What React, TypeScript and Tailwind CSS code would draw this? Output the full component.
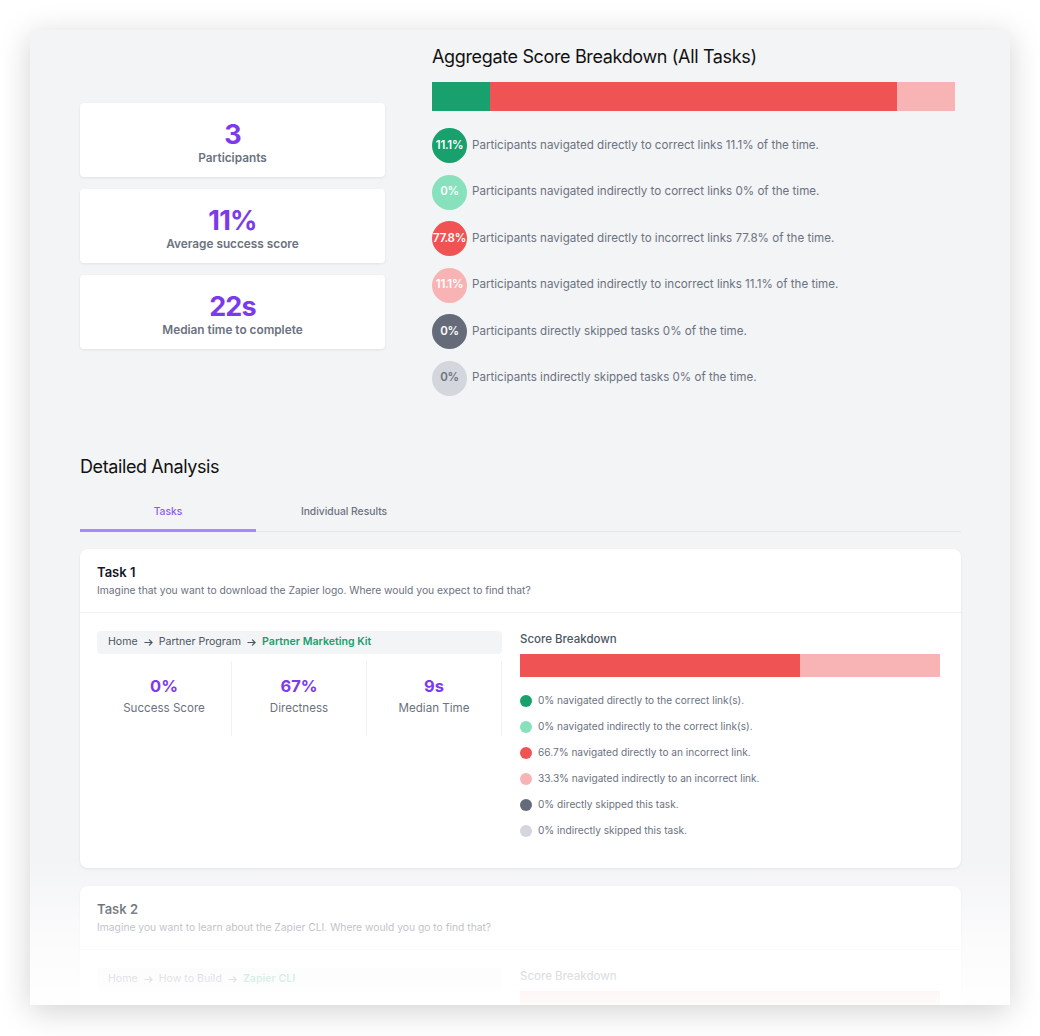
import React from 'react'

const aggregate = [
  { pct: '11.1%', bg: 'bg-[#18a06d]', fg: 'text-white', text: 'Participants navigated directly to correct links 11.1% of the time.' },
  { pct: '0%', bg: 'bg-[#86e1bc]', fg: 'text-white', text: 'Participants navigated indirectly to correct links 0% of the time.' },
  { pct: '77.8%', bg: 'bg-[#ef5353]', fg: 'text-white', text: 'Participants navigated directly to incorrect links 77.8% of the time.' },
  { pct: '11.1%', bg: 'bg-[#f8b4b4]', fg: 'text-white', text: 'Participants navigated indirectly to incorrect links 11.1% of the time.' },
  { pct: '0%', bg: 'bg-[#656b78]', fg: 'text-white', text: 'Participants directly skipped tasks 0% of the time.' },
  { pct: '0%', bg: 'bg-[#d3d6dc]', fg: 'text-[#6b7280]', text: 'Participants indirectly skipped tasks 0% of the time.' },
]

const stats = [
  { value: '3', label: 'Participants' },
  { value: '11%', label: 'Average success score' },
  { value: '22s', label: 'Median time to complete' },
]

const legend1 = [
  { dot: 'bg-[#18a06d]', text: '0% navigated directly to the correct link(s).' },
  { dot: 'bg-[#86e1bc]', text: '0% navigated indirectly to the correct link(s).' },
  { dot: 'bg-[#ef5353]', text: '66.7% navigated directly to an incorrect link.' },
  { dot: 'bg-[#f8b4b4]', text: '33.3% navigated indirectly to an incorrect link.' },
  { dot: 'bg-[#656b78]', text: '0% directly skipped this task.' },
  { dot: 'bg-[#d3d6dc]', text: '0% indirectly skipped this task.' },
]

function Arrow() {
  return (
    <svg width="9" height="9" viewBox="0 0 10 10" className="mx-[6px] text-[#4b5563]" fill="none" stroke="currentColor" strokeWidth="1.3" strokeLinecap="round" strokeLinejoin="round">
      <path d="M1 5h8M6 2l3 3-3 3" />
    </svg>
  )
}

function Breadcrumb({ items, last }: { items: string[]; last: string }) {
  return (
    <div className="flex h-[23px] items-center rounded bg-[#f3f4f6] px-[11px] text-[10.6px] text-[#4b5563]">
      {items.map((it) => (
        <React.Fragment key={it}>
          <span>{it}</span>
          <Arrow />
        </React.Fragment>
      ))}
      <span className="font-semibold text-[#18a06d]">{last}</span>
    </div>
  )
}

function TaskCard({
  title,
  question,
  crumbs,
  last,
  metrics,
  direct,
  indirect,
  legend,
}: {
  title: string
  question: string
  crumbs: string[]
  last: string
  metrics: { value: string; label: string }[]
  direct: number
  indirect: number
  legend: { dot: string; text: string }[]
}) {
  return (
    <div className="rounded-lg bg-white shadow-[0_1px_3px_rgba(0,0,0,0.08)]">
      <div className="border-b border-[#eceef1] px-[17px] pt-[13px] pb-[14px]">
        <div className="text-[13px] leading-5 font-semibold text-[#111827]">{title}</div>
        <div className="text-[10.3px] leading-4 text-[#6b7280]">{question}</div>
      </div>
      <div className="flex gap-[18px] pt-[18px] pr-[21px] pb-[29px] pl-[17px]">
        <div className="w-[405px]">
          <Breadcrumb items={crumbs} last={last} />
          <div className="mt-[7px] grid grid-cols-3">
            {metrics.map((m) => (
              <div key={m.label} className="flex h-[75px] flex-col items-center border-r border-[#f1f2f4] pt-[14px]">
                <div className="text-[16.5px] leading-[22px] font-bold text-[#7c3aed]">{m.value}</div>
                <div className="mt-[2px] text-[11.6px] leading-[18px] text-[#6b7280]">{m.label}</div>
              </div>
            ))}
          </div>
        </div>
        <div className="flex-1">
          <div className="text-[11.5px] leading-[16px] font-medium text-[#4b5563]">Score Breakdown</div>
          <div className="mt-[7px] flex h-[23px] w-full">
            <div className="h-full bg-[#ef5353]" style={{ width: `${direct}%` }} />
            <div className="h-full bg-[#f8b4b4]" style={{ width: `${indirect}%` }} />
          </div>
          {legend.length > 0 && (
            <div className="mt-[16px] flex flex-col gap-[10px]">
              {legend.map((l) => (
                <div key={l.text} className="flex h-4 items-center">
                  <span className={`h-3 w-3 rounded-full ${l.dot}`} />
                  <span className="ml-[6px] text-[10.1px] text-[#6b7280]">{l.text}</span>
                </div>
              ))}
            </div>
          )}
        </div>
      </div>
    </div>
  )
}

export default function App() {
  return (
    <div className="h-[1036px] overflow-hidden bg-white pt-[30px] pl-[30px] font-['Inter','Noto_Sans',sans-serif]">
      <div className="relative h-[975px] w-[980px] overflow-hidden bg-[#f3f4f6] shadow-[0_6px_30px_rgba(0,0,0,0.18)]">
        <div className="pt-[13px] pr-[49px] pl-[50px]">
          {/* Top summary */}
          <div className="flex">
            <div className="mt-[60px] flex w-[305px] flex-col gap-3">
              {stats.map((s) => (
                <div key={s.label} className="flex h-[74px] flex-col items-center rounded bg-white pt-[17px] shadow-[0_1px_3px_rgba(0,0,0,0.08)]">
                  <div className="text-[27px] leading-[30px] font-bold tracking-[-0.8px] text-[#7c3aed]">{s.value}</div>
                  <div className="text-[11.8px] leading-4 font-semibold text-[#6b7280]">{s.label}</div>
                </div>
              ))}
            </div>
            <div className="ml-[47px] w-[523px]">
              <h2 className="text-[18px] leading-[28px] tracking-[-0.35px] text-[#111]">Aggregate Score Breakdown (All Tasks)</h2>
              <div className="mt-[11px] flex h-[29px] w-full">
                <div className="h-full bg-[#18a06d]" style={{ width: '11.1%' }} />
                <div className="h-full bg-[#ef5353]" style={{ width: '77.8%' }} />
                <div className="h-full bg-[#f8b4b4]" style={{ width: '11.1%' }} />
              </div>
              <div className="mt-[17px] flex flex-col gap-[11.5px]">
                {aggregate.map((a) => (
                  <div key={a.text} className="flex items-center">
                    <div className={`flex h-[35px] w-[35px] shrink-0 items-center justify-center rounded-full text-[11.5px] font-semibold tracking-[-0.3px] ${a.bg} ${a.fg}`}>
                      {a.pct}
                    </div>
                    <span className="ml-[5px] text-[11.6px] text-[#6b7280]">{a.text}</span>
                  </div>
                ))}
              </div>
            </div>
          </div>

          {/* Detailed analysis */}
          <h2 className="mt-[57px] text-[18px] leading-[28px] tracking-[-0.4px] text-[#111]">Detailed Analysis</h2>
          <div className="mt-[6px] flex border-b border-[#e5e7eb]">
            <div className="-mb-px w-[176px] border-b-[3px] border-[#a78bfa] pt-4 pb-[10px] text-center text-[10.3px] leading-4 font-medium text-[#8b5cf6]">
              Tasks
            </div>
            <div className="w-[176px] pt-4 pb-[10px] text-center text-[10.3px] leading-4 font-medium text-[#6b7280]">
              Individual Results
            </div>
          </div>

          <div className="mt-[17px] flex flex-col gap-[18px]">
            <TaskCard
              title="Task 1"
              question="Imagine that you want to download the Zapier logo. Where would you expect to find that?"
              crumbs={['Home', 'Partner Program']}
              last="Partner Marketing Kit"
              metrics={[
                { value: '0%', label: 'Success Score' },
                { value: '67%', label: 'Directness' },
                { value: '9s', label: 'Median Time' },
              ]}
              direct={66.7}
              indirect={33.3}
              legend={legend1}
            />
            {/* only the top of task 2 shows before the panel is cut off */}
            <TaskCard
              title="Task 2"
              question="Imagine you want to learn about the Zapier CLI. Where would you go to find that?"
              crumbs={['Home', 'How to Build']}
              last="Zapier CLI"
              metrics={[]}
              direct={0}
              indirect={100}
              legend={[]}
            />
          </div>
        </div>

        {/* fade-out at the bottom */}
        <div className="pointer-events-none absolute inset-x-0 bottom-0 h-[148px] bg-linear-to-b from-white/0 via-white/60 to-white/95" />
      </div>
    </div>
  )
}
